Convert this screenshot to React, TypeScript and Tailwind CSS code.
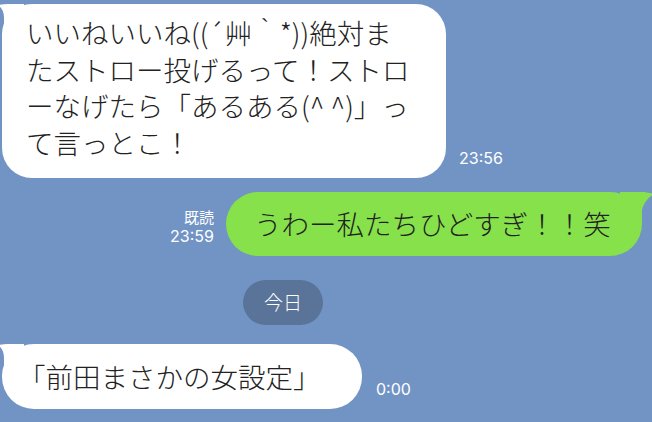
import React from "react";

const jp = { fontFamily: '"Noto Sans CJK JP", "Noto Sans", sans-serif' };
const num = { fontFamily: 'Inter, "Liberation Sans", sans-serif' };

function LeftTail() {
  return (
    <svg
      className="absolute left-[-4px] top-[-2px]"
      width="26"
      height="28"
      viewBox="0 0 26 28"
    >
      <path
        d="M6 28 L6 16 C6 10 4 6 0 3 C6 2 12 2 16 2 L26 2 L26 28 Z"
        fill="#ffffff"
      />
    </svg>
  );
}

function RightTail() {
  return (
    <svg
      className="absolute right-[-12px] top-0"
      width="34"
      height="32"
      viewBox="0 0 34 32"
    >
      <path
        d="M0 0 L22 0 C26 0 30 1 34 2 C29 5 24 10 22 18 L22 32 L0 32 Z"
        fill="#86e14b"
      />
    </svg>
  );
}

export default function App() {
  return (
    <div
      className="w-[652px] h-[422px] overflow-hidden bg-[#7294c5] flex flex-col text-[#222222] font-light"
      style={jp}
    >
      {/* Row 1 */}
      <div className="flex items-end pt-[4px] pl-[2px]">
        <div className="relative w-[444px] h-[174px] bg-white rounded-[30px] pl-[24px] pt-[10px] text-[27.5px] leading-[36.5px] whitespace-nowrap">
          <LeftTail />
          <div className="relative">
            <div>いいねいいね((´艸｀*))絶対ま</div>
            <div>たストロー投げるって！ストロ</div>
            <div>ーなげたら「あるある(^ ^)」っ</div>
            <div>て言っとこ！</div>
          </div>
        </div>
        <div
          className="ml-[13px] mb-[11px] text-white text-[16px] leading-[18px] font-normal"
          style={num}
        >
          23:56
        </div>
      </div>

      {/* Row 2 */}
      <div className="flex justify-end items-end mt-[14px] pr-[10px]">
        <div className="flex flex-col items-end mr-[12px] mb-[10px] text-white font-normal">
          <div className="text-[15px] leading-[18px]">既読</div>
          <div className="text-[16px] leading-[20px]" style={num}>
            23:59
          </div>
        </div>
        <div className="relative w-[416px] h-[64px] bg-[#86e14b] rounded-[32px] flex items-center pl-[28px] text-[27.5px] whitespace-nowrap">
          <RightTail />
          <span className="relative">うわー私たちひどすぎ！！笑</span>
        </div>
      </div>

      {/* Date pill */}
      <div className="mt-[24px] ml-[243px]">
        <div className="w-[80px] h-[45px] rounded-full bg-[#5a7499] flex items-center justify-center text-white text-[19px]">
          今日
        </div>
      </div>

      {/* Row 3 */}
      <div className="flex items-end mt-[19px] pl-[2px]">
        <div className="relative w-[360px] h-[65px] bg-white rounded-[32px] flex items-center pl-[16px] text-[27.5px] whitespace-nowrap">
          <LeftTail />
          <span className="relative">「前田まさかの女設定」</span>
        </div>
        <div
          className="ml-[14px] mb-[11px] text-white text-[16px] leading-[18px] font-normal"
          style={num}
        >
          0:00
        </div>
      </div>
    </div>
  );
}
